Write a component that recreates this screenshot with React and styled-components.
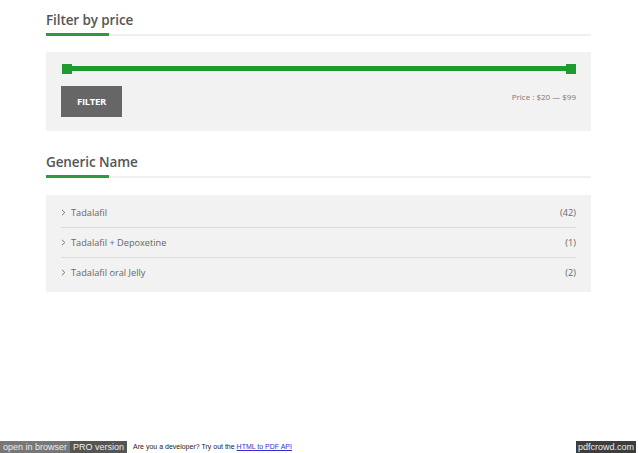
import React from "react";
import styled, { createGlobalStyle } from "styled-components";

const GlobalStyle = createGlobalStyle`
  html, body {
    margin: 0;
    padding: 0;
    background: #fff;
  }
  body {
    font-family: "Open Sans", "Liberation Sans", sans-serif;
    color: #555;
  }
`;

const Page = styled.div`
  width: 638px;
  height: 453px;
  display: flex;
  flex-direction: column;
  overflow: hidden;
`;

const Sidebar = styled.div`
  padding: 11px 47px 0 46px;
  display: flex;
  flex-direction: column;
  flex: 1;
`;

const Widget = styled.section`
  margin-bottom: 22px;
`;

const Title = styled.h3`
  margin: 0;
  font-size: 13.5px;
  font-weight: 600;
  color: #555;
  letter-spacing: -0.1px;
  line-height: 18px;
  padding-bottom: 5px;
  border-bottom: 2px solid #f0f0f0;
  position: relative;

  &::after {
    content: "";
    position: absolute;
    left: 0;
    bottom: -2px;
    width: 63px;
    height: 3px;
    background: #2e9a3e;
  }
`;

const Panel = styled.div`
  margin-top: ${(p) => p.$gap}px;
  background: #f2f2f2;
  padding: ${(p) => p.$pad};
`;

const Track = styled.div`
  height: 5px;
  background: #1f9a2e;
  display: flex;
  justify-content: space-between;
  align-items: center;
`;

const Handle = styled.span`
  width: 10px;
  height: 10px;
  background: #1f9a2e;
`;

const SliderRow = styled.div`
  display: flex;
  justify-content: space-between;
  align-items: flex-start;
  margin-top: 15px;
`;

const FilterButton = styled.button`
  width: 61px;
  height: 31px;
  margin-left: -1px;
  border: none;
  background: #666;
  color: #fff;
  font-family: "Open Sans", sans-serif;
  font-size: 9.5px;
  font-weight: 700;
  letter-spacing: -0.3px;
  padding: 0;
`;

const PriceLabel = styled.div`
  font-size: 8px;
  color: #777;
  margin-top: 5px;
`;

const List = styled.ul`
  list-style: none;
  margin: 0;
  padding: 0;
`;

const Item = styled.li`
  box-sizing: border-box;
  display: flex;
  align-items: center;
  justify-content: space-between;
  height: 30px;
  font-size: 9.2px;
  color: #666;
  border-top: ${(p) => (p.$first ? "none" : "1px solid #dcdcdc")};
`;

const ItemName = styled.span`
  display: flex;
  align-items: center;
  gap: 5px;
`;

const Count = styled.span`
  color: #666;
`;

const Footer = styled.div`
  height: 12px;
  display: flex;
  align-items: stretch;
  font-family: "Liberation Sans", Arial, sans-serif;
  font-size: 9px;
  line-height: 12px;
`;

const Tag = styled.span`
  background: ${(p) => p.$bg};
  color: #eee;
  padding: 0 3px;
  white-space: nowrap;
`;

const Promo = styled.span`
  font-size: 7px;
  color: #222;
  padding-left: 6px;
  flex: 1;
  white-space: nowrap;

  a {
    color: #33c;
    text-decoration: underline;
  }
`;

const Brand = styled.span`
  background: #3d3d3d;
  color: #eee;
  padding: 0 2px;
  margin-right: 2px;
`;

const Chevron = () => (
  <svg width="5" height="7" viewBox="0 0 5 7">
    <path d="M1 0.8 L3.8 3.5 L1 6.2" fill="none" stroke="#666" strokeWidth="0.9" />
  </svg>
);

const generics = [
  { name: "Tadalafil", count: 42 },
  { name: "Tadalafil + Depoxetine", count: 1 },
  { name: "Tadalafil oral Jelly", count: 2 },
];

export default function App() {
  return (
    <Page>
      <GlobalStyle />
      <Sidebar>
        <Widget>
          <Title>Filter by price</Title>
          <Panel $gap={16} $pad="14px 15px 14px 16px">
            <Track>
              <Handle />
              <Handle />
            </Track>
            <SliderRow>
              <FilterButton>FILTER</FilterButton>
              <PriceLabel>Price : $20 — $99</PriceLabel>
            </SliderRow>
          </Panel>
        </Widget>
        <Widget>
          <Title>Generic Name</Title>
          <Panel $gap={17} $pad="2px 15px 5px 15px">
            <List>
              {generics.map((g, i) => (
                <Item key={g.name} $first={i === 0}>
                  <ItemName>
                    <Chevron />
                    {g.name}
                  </ItemName>
                  <Count>({g.count})</Count>
                </Item>
              ))}
            </List>
          </Panel>
        </Widget>
      </Sidebar>
      <Footer>
        <Tag $bg="#777">open in browser</Tag>
        <Tag $bg="#555">PRO version</Tag>
        <Promo>
          Are you a developer? Try out the <a>HTML to PDF API</a>
        </Promo>
        <Brand>pdfcrowd.com</Brand>
      </Footer>
    </Page>
  );
}
